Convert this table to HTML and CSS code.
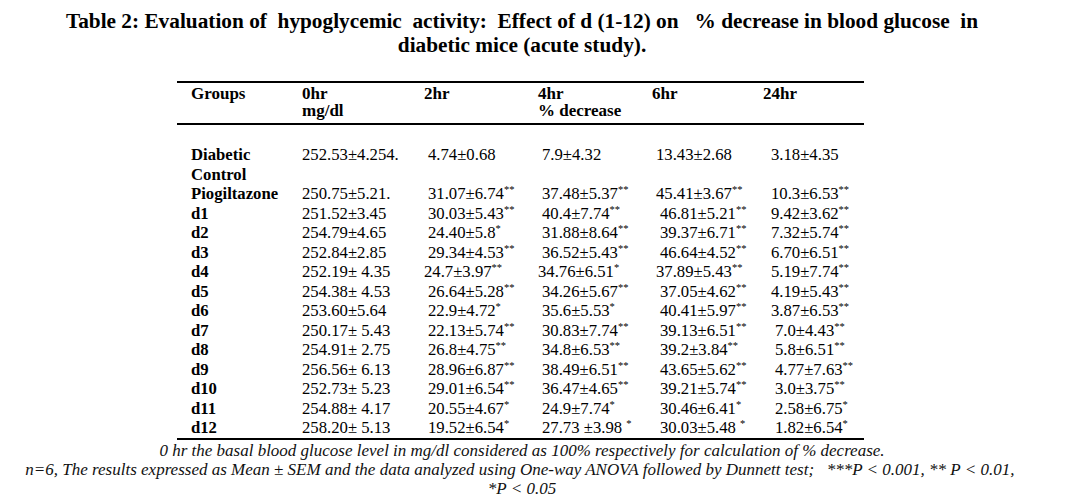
FILE: index.html
```html
<!DOCTYPE html>
<html lang="en">
<head>
<meta charset="utf-8">
<title>Table 2</title>
<link rel="stylesheet" href="styles.css">
</head>
<body>
<div class="page">
  <h1 class="title"><span class="tline">Table 2: Evaluation of  hypoglycemic  activity:  Effect of d (1-12) on   % decrease in blood glucose  in</span><span class="tline">diabetic mice (acute study).</span></h1>

  <div class="tablewrap">
    <table class="data">
      <colgroup>
        <col class="c1"><col class="c2"><col class="c3"><col class="c4"><col class="c5"><col class="c6">
      </colgroup>
      <thead>
        <tr>
          <th class="first">Groups</th>
          <th>0hr<br>mg/dl</th>
          <th>2hr</th>
          <th>4hr<br>% decrease</th>
          <th>6hr</th>
          <th>24hr</th>
        </tr>
      </thead>
      <tbody>
        <tr class="row-first">
          <th class="first">Diabetic<br>Control</th>
          <td>252.53±4.254.</td>
          <td class="o4">4.74±0.68</td>
          <td class="o4">7.9±4.32</td>
          <td class="o4">13.43±2.68</td>
          <td class="o8">3.18±4.35</td>
        </tr>
        <tr>
          <th class="first">Piogiltazone</th>
          <td>250.75±5.21.</td>
          <td class="o4">31.07±6.74<sup>**</sup></td>
          <td class="o4">37.48±5.37<sup>**</sup></td>
          <td class="o4">45.41±3.67<sup>**</sup></td>
          <td class="o8">10.3±6.53<sup>**</sup></td>
        </tr>
        <tr>
          <th class="first">d1</th>
          <td>251.52±3.45</td>
          <td class="o4">30.03±5.43<sup>**</sup></td>
          <td class="o4">40.4±7.74<sup>**</sup></td>
          <td class="o8">46.81±5.21<sup>**</sup></td>
          <td class="o8">9.42±3.62<sup>**</sup></td>
        </tr>
        <tr>
          <th class="first">d2</th>
          <td>254.79±4.65</td>
          <td class="o4">24.40±5.8<sup>*</sup></td>
          <td class="o4">31.88±8.64<sup>**</sup></td>
          <td class="o8">39.37±6.71<sup>**</sup></td>
          <td class="o8">7.32±5.74<sup>**</sup></td>
        </tr>
        <tr>
          <th class="first">d3</th>
          <td>252.84±2.85</td>
          <td class="o4">29.34±4.53<sup>**</sup></td>
          <td class="o4">36.52±5.43<sup>**</sup></td>
          <td class="o8">46.64±4.52<sup>**</sup></td>
          <td class="o8">6.70±6.51<sup>**</sup></td>
        </tr>
        <tr>
          <th class="first">d4</th>
          <td>252.19± 4.35</td>
          <td>24.7±3.97<sup>**</sup></td>
          <td>34.76±6.51<sup>*</sup></td>
          <td class="o4">37.89±5.43<sup>**</sup></td>
          <td class="o8">5.19±7.74<sup>**</sup></td>
        </tr>
        <tr>
          <th class="first">d5</th>
          <td>254.38± 4.53</td>
          <td class="o4">26.64±5.28<sup>**</sup></td>
          <td class="o4">34.26±5.67<sup>**</sup></td>
          <td class="o8">37.05±4.62<sup>**</sup></td>
          <td class="o8">4.19±5.43<sup>**</sup></td>
        </tr>
        <tr>
          <th class="first">d6</th>
          <td>253.60±5.64</td>
          <td class="o4">22.9±4.72<sup>*</sup></td>
          <td class="o4">35.6±5.53<sup>*</sup></td>
          <td class="o8">40.41±5.97<sup>**</sup></td>
          <td class="o8">3.87±6.53<sup>**</sup></td>
        </tr>
        <tr>
          <th class="first">d7</th>
          <td>250.17± 5.43</td>
          <td class="o4">22.13±5.74<sup>**</sup></td>
          <td class="o4">30.83±7.74<sup>**</sup></td>
          <td class="o8">39.13±6.51<sup>**</sup></td>
          <td class="o12">7.0±4.43<sup>**</sup></td>
        </tr>
        <tr>
          <th class="first">d8</th>
          <td>254.91± 2.75</td>
          <td class="o4">26.8±4.75<sup>**</sup></td>
          <td class="o4">34.8±6.53<sup>**</sup></td>
          <td class="o8">39.2±3.84<sup>**</sup></td>
          <td class="o12">5.8±6.51<sup>**</sup></td>
        </tr>
        <tr>
          <th class="first">d9</th>
          <td>256.56± 6.13</td>
          <td class="o4">28.96±6.87<sup>**</sup></td>
          <td class="o4">38.49±6.51<sup>**</sup></td>
          <td class="o8">43.65±5.62<sup>**</sup></td>
          <td class="o12">4.77±7.63<sup>**</sup></td>
        </tr>
        <tr>
          <th class="first">d10</th>
          <td>252.73± 5.23</td>
          <td class="o4">29.01±6.54<sup>**</sup></td>
          <td class="o4">36.47±4.65<sup>**</sup></td>
          <td class="o8">39.21±5.74<sup>**</sup></td>
          <td class="o12">3.0±3.75<sup>**</sup></td>
        </tr>
        <tr>
          <th class="first">d11</th>
          <td>254.88± 4.17</td>
          <td class="o4">20.55±4.67<sup>*</sup></td>
          <td class="o4">24.9±7.74<sup>*</sup></td>
          <td class="o8">30.46±6.41<sup>*</sup></td>
          <td class="o12">2.58±6.75<sup>*</sup></td>
        </tr>
        <tr class="row-last">
          <th class="first">d12</th>
          <td>258.20± 5.13</td>
          <td class="o4">19.52±6.54<sup>*</sup></td>
          <td class="o4">27.73 ±3.98 <sup>*</sup></td>
          <td class="o8">30.03±5.48 <sup>*</sup></td>
          <td class="o12">1.82±6.54<sup>*</sup></td>
        </tr>
      </tbody>
    </table>
  </div>

  <div class="notes">
    <p class="note">0 hr the basal blood glucose level in mg/dl considered as 100% respectively for calculation of % decrease.</p>
    <p class="note">n=6, The results expressed as Mean ± SEM and the data analyzed using One-way ANOVA followed by Dunnett test;&nbsp;&nbsp; ***P &lt; 0.001, ** P &lt; 0.01,&nbsp;<br>*P &lt; 0.05</p>
  </div>
</div>
</body>
</html>
```

FILE: styles.css
```css
html, body {
  margin: 0;
  padding: 0;
  background: #ffffff;
}

body {
  font-family: "Liberation Serif", "Times New Roman", serif;
  color: #000000;
}

.page {
  width: 1044px;
  padding-top: 9px;
}

.title {
  margin: 0;
  font-size: 21.3px;
  line-height: 24px;
  font-weight: bold;
  text-align: center;
  color: #000;
}

.tline {
  display: block;
  white-space: pre;
}

.tablewrap {
  margin-top: 24px;
  padding-right: 3px;
  display: flex;
  justify-content: center;
}

.data {
  width: 687px;
  table-layout: fixed;
  border-collapse: collapse;
  font-size: 16.7px;
}

.c1 { width: 125px; }
.c2 { width: 122px; }
.c3 { width: 114px; }
.c4 { width: 114px; }
.c5 { width: 111px; }
.c6 { width: 101px; }

.data th,
.data td {
  padding: 0;
  text-align: left;
  vertical-align: top;
  white-space: pre;
}

.data thead th {
  font-size: 17px;
  font-weight: bold;
  line-height: 17px;
  padding-top: 2px;
  padding-bottom: 4px;
  border-top: 2.5px solid #000;
  border-bottom: 2.5px solid #000;
}

.data tbody th,
.data tbody td {
  line-height: 19.5px;
}

.data tbody th {
  font-weight: bold;
}

.data .first {
  padding-left: 14px;
}

.data .row-first th,
.data .row-first td {
  padding-top: 20px;
}

.data .row-last th,
.data .row-last td {
  border-bottom: 2.5px solid #000;
}

.data td.o4 { padding-left: 4px; }
.data td.o8 { padding-left: 8px; }
.data td.o12 { padding-left: 12px; }

.data sup {
  font-size: 10.5px;
  line-height: 0;
  vertical-align: 6px;
}

.notes {
  padding-top: 1px;
}

.note {
  margin: 0;
  font-style: italic;
  font-size: 17px;
  line-height: 19px;
  text-align: center;
  color: #111;
}
```
